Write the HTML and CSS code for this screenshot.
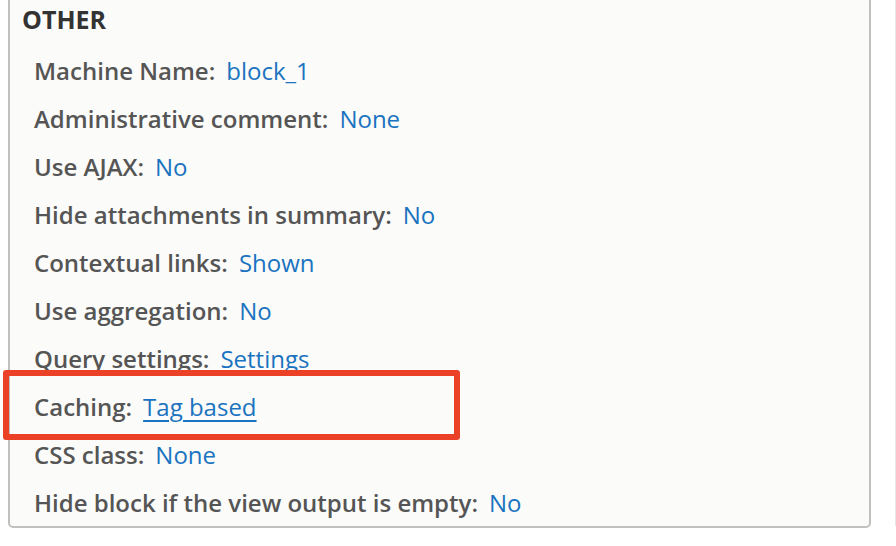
FILE: index.html
```html
<!DOCTYPE html>
<html>
<head>
<meta charset="utf-8">
<link rel="stylesheet" href="styles.css">
</head>
<body>
<div class="page">
  <section class="panel">
    <h2 class="panel-title">OTHER</h2>
    <ul class="settings">
      <li class="row"><span class="label">Machine Name:</span><a class="value" href="#">block_1</a></li>
      <li class="row"><span class="label">Administrative comment:</span><a class="value" href="#">None</a></li>
      <li class="row"><span class="label">Use AJAX:</span><a class="value" href="#">No</a></li>
      <li class="row"><span class="label">Hide attachments in summary:</span><a class="value" href="#">No</a></li>
      <li class="row"><span class="label">Contextual links:</span><a class="value" href="#">Shown</a></li>
      <li class="row"><span class="label">Use aggregation:</span><a class="value" href="#">No</a></li>
      <li class="row"><span class="label">Query settings:</span><a class="value" href="#">Settings</a></li>
      <li class="row row-highlight"><span class="label">Caching:</span><a class="value value-underlined" href="#">Tag based</a><span class="highlight-box"></span></li>
      <li class="row"><span class="label">CSS class:</span><a class="value" href="#">None</a></li>
      <li class="row"><span class="label">Hide block if the view output is empty:</span><a class="value" href="#">No</a></li>
    </ul>
  </section>
</div>
</body>
</html>
```
FILE: styles.css
```css
html, body {
  margin: 0;
  padding: 0;
  background: #ffffff;
}
body {
  font-family: "Open Sans", "Noto Sans", sans-serif;
  width: 896px;
  height: 546px;
  overflow: hidden;
}
.page {
  width: 895px;
  height: 546px;
  border-right: 1px solid #e6e6e6;
}
.panel {
  box-sizing: border-box;
  margin: -20px 0 0 8px;
  width: 863px;
  height: 548px;
  background: #fbfbf9;
  border: 2px solid #c0c0c0;
  border-radius: 5px;
  padding: 0 0 0 12px;
}
.panel-title {
  margin: 0;
  padding-top: 22px;
  font-size: 25px;
  line-height: 30px;
  font-weight: 700;
  color: #333333;
}
.settings {
  list-style: none;
  margin: 0;
  padding: 13px 0 0 12px;
}
.row {
  position: relative;
  height: 48px;
  line-height: 48px;
  font-size: 24px;
  white-space: nowrap;
}
.label {
  font-weight: 600;
  color: #555555;
}
.value {
  margin-left: 11px;
  color: #1a73c0;
  text-decoration: none;
}
.value-underlined {
  text-decoration: underline;
  text-underline-offset: 4px;
  text-decoration-thickness: 2px;
}
.highlight-box {
  position: absolute;
  left: -31px;
  top: -13px;
  width: 445px;
  height: 58px;
  border: 6px solid #ea4127;
  border-radius: 3px;
}
```
